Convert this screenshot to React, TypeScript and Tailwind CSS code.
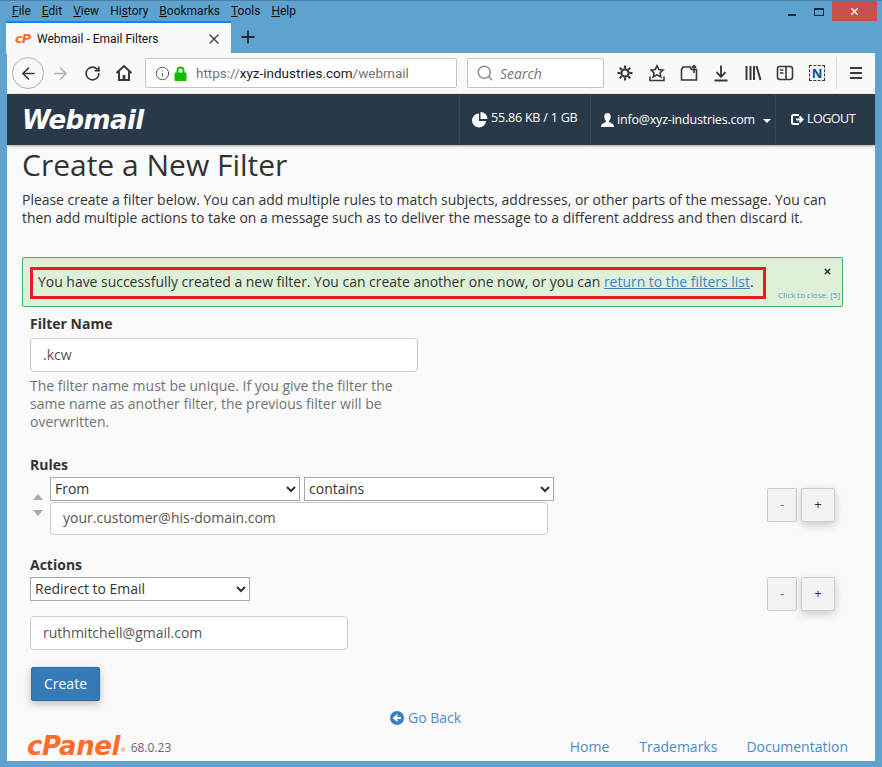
import { ArrowLeft, ArrowRight, Info, Plus, RotateCw, Search, X } from "lucide-react"

const menus = [
  { pre: "", key: "F", post: "ile" },
  { pre: "", key: "E", post: "dit" },
  { pre: "", key: "V", post: "iew" },
  { pre: "Hi", key: "s", post: "tory" },
  { pre: "", key: "B", post: "ookmarks" },
  { pre: "", key: "T", post: "ools" },
  { pre: "", key: "H", post: "elp" },
]

function ToolIcon({ children }: { children: React.ReactNode }) {
  return (
    <div className="w-8 h-8 flex items-center justify-center">
      <svg width="18" height="18" viewBox="0 0 18 18" fill="none" stroke="#38383d" strokeWidth="1.6">
        {children}
      </svg>
    </div>
  )
}

function Toolbar() {
  return (
    <div className="h-[41px] shrink-0 bg-[#f9f9fa] flex items-center pl-[5px] pb-[1px]">
      <div className="w-8 h-8 rounded-full border border-[#b1b1b3] flex items-center justify-center">
        <ArrowLeft size={19} color="#38383d" strokeWidth={2} />
      </div>
      <div className="w-8 h-8 flex items-center justify-center">
        <ArrowRight size={19} color="#b1b1b3" strokeWidth={2} />
      </div>
      <div className="w-8 h-8 flex items-center justify-center">
        <RotateCw size={17} color="#38383d" strokeWidth={2.4} />
      </div>
      <ToolIcon>
        <path d="M1.5 9 9 2l7.5 7M4 7.5V16h10V7.5" strokeWidth="2" />
        <rect x="7.6" y="11" width="2.8" height="5" fill="#38383d" stroke="none" />
      </ToolIcon>

      <div className="ml-[5px] w-[312px] h-[30px] bg-white border border-[#c4c4c4] rounded-[2px] flex items-center pl-[9px] text-[13.5px] font-['Roboto',sans-serif]">
        <Info size={15} color="#5b5b5f" strokeWidth={1.6} />
        <svg className="ml-[4px]" width="13" height="15" viewBox="0 0 13 15" fill="none">
          <path d="M3.500 7V4.500a3 3 0 0 1 6 0V7" stroke="#12bc00" strokeWidth="2" />
          <rect x="0.500" y="6.500" width="12" height="8.500" rx="1" fill="#12bc00" />
        </svg>
        <span className="ml-[9px] text-[#737373]">
          https://<span className="text-[#1a1a1a]">xyz-industries.com</span>/webmail
        </span>
      </div>

      <div className="ml-[10px] w-[137px] h-[30px] bg-white border border-[#c4c4c4] rounded-[2px] flex items-center pl-[8px] text-[14px] italic text-[#737373]">
        <Search size={18} color="#8f8f8f" strokeWidth={2} />
        <span className="ml-[6px]">Search</span>
      </div>

      <div className="ml-[5px] flex">
        <ToolIcon>
          <circle cx="9" cy="9" r="3.6" strokeWidth="2.2" />
          <path d="M9 1.5v3M9 13.5v3M1.5 9h3M13.5 9h3M3.7 3.7l2.1 2.1M12.2 12.2l2.1 2.1M3.7 14.3l2.1-2.1M12.2 5.8l2.1-2.1" strokeWidth="2" />
        </ToolIcon>
        <ToolIcon>
          <path d="M9 1.8l1.9 3.8 4 .5-2.9 2.8.8 4-3.8-2-3.8 2 .8-4-2.9-2.8 4-.5z" />
          <path d="M2 12.500V16.500h14V12.500" />
        </ToolIcon>
        <ToolIcon>
          <path d="M1.500 5.500V16h15V5.500h-5L10 3H3z" />
          <path d="M14 9V1.500M11.800 3.600 14 1.500l2.200 2.100" />
        </ToolIcon>
        <ToolIcon>
          <path d="M9 1.500v11M4.500 8.200 9 12.800l4.500-4.600M2.500 16.500h13" strokeWidth="1.900" />
        </ToolIcon>
        <ToolIcon>
          <path d="M2.500 2v14M6.500 2v14M10 2v14M12.500 2l4 14" strokeWidth="2" />
        </ToolIcon>
        <ToolIcon>
          <rect x="1.500" y="2.500" width="15" height="13" rx="2.500" />
          <path d="M10 2.500v13M3.800 6h3.600M3.800 9h3.600" />
        </ToolIcon>
        <div className="w-8 h-8 flex items-center justify-center">
          <div className="w-4 h-4 border border-dashed border-[#38383d] flex items-center justify-center text-[13px] leading-none font-bold text-[#0a4a9c]">
            N
          </div>
        </div>
      </div>
      <div className="ml-[3px] w-px h-8 bg-[#dcdcde]" />
      <div className="ml-[3px]">
        <ToolIcon>
          <path d="M3 4h12M3 9h12M3 14h12" strokeWidth="1.800" />
        </ToolIcon>
      </div>
    </div>
  )
}

function WebmailHeader() {
  return (
    <header className="h-[51px] shrink-0 bg-[#29394a] flex items-stretch text-white text-[12.5px] shadow-[0_1px_3px_rgba(0,0,0,0.35)]">
      <div className="flex-1 flex items-center pl-[15px]">
        <span className="text-[26px] leading-none font-bold italic tracking-[-0.6px] font-['DejaVu_Sans',sans-serif]">Webmail</span>
      </div>
      <div className="w-[131px] border-l border-[#35475a] flex items-center pl-[12px]">
        <svg className="shrink-0" width="16" height="16" viewBox="0 0 16 16" fill="white">
          <path d="M7 1.500A7 7 0 1 0 14 9H7z" />
          <path d="M8.500 0v7H15.500A7 7 0 0 0 8.500 0z" />
        </svg>
        <span className="ml-[3px] -mt-[2px] tracking-[-0.2px]">55.86 KB / 1 GB</span>
      </div>
      <div className="w-[185px] border-l border-[#35475a] flex items-center pl-[10px]">
        <svg className="shrink-0" width="13" height="14" viewBox="0 0 13 14" fill="white">
          <path d="M6.500 0C8.600 0 9.700 1.600 9.700 3.800 9.700 5.800 8.700 7.200 8 8c0 1 .6 1.400 2 2 1.600.7 3 1.200 3 4H0c0-2.800 1.400-3.300 3-4 1.400-.6 2-1 2-2-.7-.8-1.700-2.200-1.700-4.200C3.300 1.600 4.400 0 6.500 0z" />
        </svg>
        <span className="ml-[3px] mt-[2px] tracking-[-0.2px] whitespace-nowrap">info@xyz-industries.com</span>
        <span className="ml-[8px] mt-[2px] w-0 h-0 border-x-4 border-x-transparent border-t-4 border-t-white" />
      </div>
      <div className="w-[100px] border-l border-[#35475a] flex items-center pl-[15px]">
        <svg className="shrink-0" width="13" height="13" viewBox="0 0 13 13" fill="none" stroke="white" strokeWidth="2">
          <path d="M8 2H2.500A1.500 1.500 0 0 0 1 3.500v6A1.500 1.500 0 0 0 2.500 11H8" />
          <path d="M5 6.500h6M8.500 3.500l3 3-3 3" />
        </svg>
        <span className="ml-[3px] -mt-[1px] tracking-[-0.5px]">LOGOUT</span>
      </div>
    </header>
  )
}

function StepButtons({ className }: { className: string }) {
  return (
    <div className={`ml-auto mr-[17px] flex gap-1 text-[13px] ${className}`}>
      <button className="w-[30px] h-[34px] bg-[#f3f3f3] border border-[#ccc] rounded-[2px] text-[#777]">-</button>
      <button className="w-[34px] h-[34px] bg-[#f3f3f3] border border-[#ccc] rounded-[2px] text-[#1f2a44] shadow-[0_3px_8px_rgba(0,0,0,0.2)]">+</button>
    </div>
  )
}

function FilterForm() {
  return (
    <form className="px-[23px] text-[14px] text-[#333]">
      <label className="block font-bold leading-5 mt-[7px]">Filter Name</label>
      <input
        readOnly
        value=".kcw"
        className="mt-[4px] w-[388px] h-[34px] block bg-white border border-[#ccc] rounded-[4px] px-[12px] pb-[2px] text-[#555] outline-none"
      />
      <p className="mt-[5px] w-[388px] leading-[18px] text-[#737373]">
        The filter name must be unique. If you give the filter the same name as another filter, the previous filter will be overwritten.
      </p>

      <label className="block font-bold leading-5 mt-[24px]">Rules</label>
      <div className="flex mt-[2px]">
        <div className="w-[20px] flex flex-col items-start pl-[3px] pt-[17px] gap-[10px]">
          <span className="w-0 h-0 border-x-[5px] border-x-transparent border-b-[6px] border-b-[#aaa]" />
          <span className="w-0 h-0 border-x-[5px] border-x-transparent border-t-[6px] border-t-[#aaa]" />
        </div>
        <div>
          <div className="flex gap-1">
            <select defaultValue="From" className="w-[250px] h-6 pb-[2px] bg-white border border-[#a9a9a9] text-[#333] outline-none">
              <option>From</option>
              <option>Subject</option>
            </select>
            <select defaultValue="contains" className="w-[250px] h-6 pb-[2px] bg-white border border-[#a9a9a9] text-[#333] outline-none">
              <option>contains</option>
              <option>matches regex</option>
            </select>
          </div>
          <input
            readOnly
            value="your.customer@his-domain.com"
            className="mt-[1px] w-[498px] h-[33px] block bg-white border border-[#ccc] rounded-[4px] px-[12px] pb-[2px] text-[#555] outline-none"
          />
        </div>
        <StepButtons className="mt-[11px]" />
      </div>

      <label className="block font-bold leading-5 mt-[20px]">Actions</label>
      <div className="flex mt-[2px]">
        <div>
          <select defaultValue="Redirect to Email" className="w-[220px] h-6 pb-[2px] block bg-white border border-[#a9a9a9] text-[#333] outline-none">
            <option>Redirect to Email</option>
            <option>Discard Message</option>
          </select>
          <input
            readOnly
            value="ruthmitchell@gmail.com"
            className="mt-[15px] w-[318px] h-[34px] block bg-white border border-[#ccc] rounded-[4px] px-[12px] pb-[2px] text-[#555] outline-none"
          />
        </div>
        <StepButtons className="" />
      </div>

      <button type="button" className="mt-[17px] ml-px w-[69px] h-[34px] pb-[2px] block bg-[#337ab7] border border-[#2e6da4] rounded-[2px] text-white shadow-[0_3px_8px_rgba(0,0,0,0.25)]">
        Create
      </button>
    </form>
  )
}

export default function App() {
  return (
    <div className="w-[882px] h-[767px] overflow-hidden bg-[#5ea2cf] border-t border-[#4a82a8] font-['Open_Sans',sans-serif] flex flex-col">
      {/* window title row */}
      <div className="h-5 shrink-0 flex text-[12px] text-[#111] pl-[12px] font-['Roboto',sans-serif]">
        <div className="flex gap-[11px] items-center -mt-[1px]">
          {menus.map((m, i) => (
            <span key={i}>
              {m.pre}
              <span className="underline">{m.key}</span>
              {m.post}
            </span>
          ))}
        </div>
        <div className="ml-auto flex items-start mr-[5px]">
          <div className="w-[8px] h-[2px] bg-[#1a2a38] mt-[13px] mr-[18px]" />
          <div className="w-[10px] h-[8px] border border-t-2 border-[#1a2a38] mt-[7px] mr-[8px]" />
          <div className="w-[45px] h-5 bg-[#c75050] flex items-center justify-center">
            <X size={11} color="white" strokeWidth={3} />
          </div>
        </div>
      </div>

      {/* tabs */}
      <div className="h-[32px] shrink-0 flex pl-[6px]">
        <div className="w-[225px] h-[33px] bg-[#f9f9fa] border-t-2 border-[#0a84ff] flex items-center pl-[9px] pr-[9px] text-[12px] text-[#111] font-['Roboto',sans-serif]">
          <span className="w-[17px] text-[13px] leading-none font-bold italic text-[#ff6c2c] font-['DejaVu_Sans',sans-serif] tracking-[-1px]">cP</span>
          <span className="ml-[5px]">Webmail - Email Filters</span>
          <X size={16} className="ml-auto" color="#444" strokeWidth={2} />
        </div>
        <div className="ml-[7px] h-[32px] flex items-center">
          <Plus size={20} color="#1f2a30" strokeWidth={2.2} />
        </div>
      </div>

      {/* browser window body */}
      <div className="mx-[7px] w-[868px] flex-1 flex flex-col bg-[#fafafa] mb-[6px] overflow-hidden">
        <Toolbar />
        <WebmailHeader />
        <main className="flex-1 flex flex-col">
          <h1 className="ml-[15px] mt-[1px] text-[30px] leading-[38px] text-[#333]">Create a New Filter</h1>
          <p className="ml-[15px] mr-[25px] mt-[7px] text-[13.95px] leading-[18px] text-[#333]">
            Please create a filter below. You can add multiple rules to match subjects, addresses, or other parts of the message. You can then add multiple actions to take on a message such as to deliver the message to a different address and then discard it.
          </p>

          <div className="ml-[15px] mt-[30px] w-[821px] h-[50px] flex bg-[#dff0d8] border border-[#3cb371] rounded-[2px] relative">
            <div className="ml-[7px] mt-[9px] w-[736px] h-[32px] border-[3px] border-[#ed1c24] flex items-center pl-[5px] pb-[2px] text-[13.95px] text-[#333] whitespace-nowrap">
              <span>
                You have successfully created a new filter. You can create another one now, or you can{" "}
                <span className="text-[#3a87c8] underline">return to the filters list</span>.
              </span>
            </div>
            <X size={9} className="absolute top-[9px] right-[10px]" color="#333" strokeWidth={4} />
            <span className="absolute bottom-[7px] right-[2px] text-[8px] leading-none text-[#5a97c9]">Click to close. [5]</span>
          </div>

          <FilterForm />

          <div className="ml-[383px] mt-[7px] flex items-center text-[14px] text-[#4a8ccb] leading-5">
            <svg width="14" height="14" viewBox="0 0 14 14">
              <circle cx="7" cy="7" r="7" fill="#3a7fc1" />
              <path d="M11 7H5M7.500 4 4 7l3.500 3" stroke="white" strokeWidth="1.800" fill="none" />
            </svg>
            <span className="ml-[4px]">Go Back</span>
          </div>

          <footer className="mt-[5px] flex items-center pl-[20px] pr-[27px] text-[14px]">
            <span className="text-[26px] leading-none font-bold italic tracking-[-0.4px] text-[#ff6c2c] font-['DejaVu_Sans',sans-serif]">
              cPanel<sup className="text-[6px] font-normal not-italic">®</sup>
            </span>
            <span className="ml-[5px] mt-[3px] text-[12px] text-[#666]">68.0.23</span>
            <nav className="ml-auto flex gap-[30px] text-[#4a8ccb]">
              <span>Home</span>
              <span>Trademarks</span>
              <span className="-ml-px">Documentation</span>
            </nav>
          </footer>
        </main>
      </div>
    </div>
  )
}
